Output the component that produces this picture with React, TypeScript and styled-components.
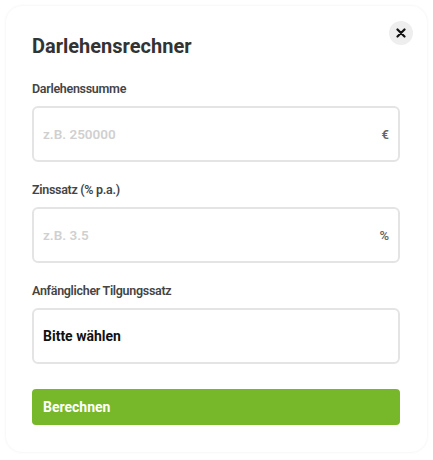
import styled, { createGlobalStyle } from "styled-components";

const GlobalStyle = createGlobalStyle`
  html, body {
    margin: 0;
    padding: 0;
    background: #ffffff;
  }
  body {
    font-family: Roboto, "Liberation Sans", Arial, sans-serif;
  }
  * {
    box-sizing: border-box;
  }
`;

type FieldProps = {
  label: string;
  placeholder: string;
  unit: string;
};

function Field({ label, placeholder, unit }: FieldProps) {
  return (
    <FieldGroup>
      <Label>{label}</Label>
      <InputBox>
        <TextInput type="text" placeholder={placeholder} />
        <Unit>{unit}</Unit>
      </InputBox>
    </FieldGroup>
  );
}

export default function App() {
  return (
    <>
      <GlobalStyle />
      <Page>
        <Card>
          <Header>
            <Title>Darlehensrechner</Title>
            <CloseButton type="button" aria-label="Schließen">
              <svg width="10" height="10" viewBox="0 0 10 10">
                <path
                  d="M1.5 1.5 L8.5 8.5 M8.5 1.5 L1.5 8.5"
                  stroke="#111"
                  strokeWidth="2.2"
                  strokeLinecap="round"
                />
              </svg>
            </CloseButton>
          </Header>
          <Form onSubmit={(e) => e.preventDefault()}>
            <Field label="Darlehenssumme" placeholder="z.B. 250000" unit="€" />
            <Field label="Zinssatz (% p.a.)" placeholder="z.B. 3.5" unit="%" />
            <FieldGroup>
              <Label>Anfänglicher Tilgungssatz</Label>
              <SelectBox>Bitte wählen</SelectBox>
            </FieldGroup>
            <SubmitButton type="submit">Berechnen</SubmitButton>
          </Form>
        </Card>
      </Page>
    </>
  );
}

// Styled Components
const Page = styled.div`
  width: 433px;
  height: 460px;
  padding: 6px;
`;

const Card = styled.div`
  width: 421px;
  height: 446px;
  background: #ffffff;
  border-radius: 16px;
  box-shadow: 0 0 3px rgba(0, 0, 0, 0.07);
  padding: 14px 27px 0 26px;
`;

const Header = styled.div`
  display: flex;
  justify-content: space-between;
  align-items: flex-start;
  height: 61px;
`;

const Title = styled.h2`
  margin: 12px 0 0;
  font-size: 20px;
  font-weight: 700;
  color: #333333;
  line-height: 28px;
`;

const CloseButton = styled.button`
  width: 24px;
  height: 24px;
  margin: 1px -13px 0 0;
  border: none;
  border-radius: 50%;
  background: #eeeeee;
  display: flex;
  align-items: center;
  justify-content: center;
  padding: 0;
  cursor: pointer;
`;

const Form = styled.form`
  display: flex;
  flex-direction: column;
`;

const FieldGroup = styled.div`
  display: flex;
  flex-direction: column;
  margin-bottom: 20px;
`;

const Label = styled.label`
  font-size: 12.5px;
  font-weight: 600;
  letter-spacing: -0.3px;
  color: #444444;
  line-height: 16px;
  margin-bottom: 9px;
`;

const InputBox = styled.div`
  height: 56px;
  border: 2px solid #e4e4e4;
  border-radius: 6px;
  display: flex;
  align-items: center;
  padding: 0 9px 0 9px;
`;

const TextInput = styled.input`
  flex: 1;
  border: none;
  outline: none;
  background: none;
  padding: 0;
  font-family: inherit;
  font-size: 13.5px;
  font-weight: 600;
  color: #333333;

  &::placeholder {
    color: #d0d0d0;
  }
`;

const Unit = styled.span`
  font-size: 13px;
  font-weight: 600;
  color: #666666;
`;

const SelectBox = styled.div`
  height: 56px;
  border: 2px solid #e4e4e4;
  border-radius: 6px;
  display: flex;
  align-items: center;
  padding: 0 9px;
  font-size: 14px;
  font-weight: 700;
  color: #111111;
`;

const SubmitButton = styled.button`
  margin-top: 5px;
  height: 36px;
  border: none;
  border-radius: 4px;
  background: #77b82a;
  color: #ffffff;
  font-family: inherit;
  font-size: 14px;
  font-weight: 700;
  text-align: left;
  padding: 0 11px;
  cursor: pointer;
`;
